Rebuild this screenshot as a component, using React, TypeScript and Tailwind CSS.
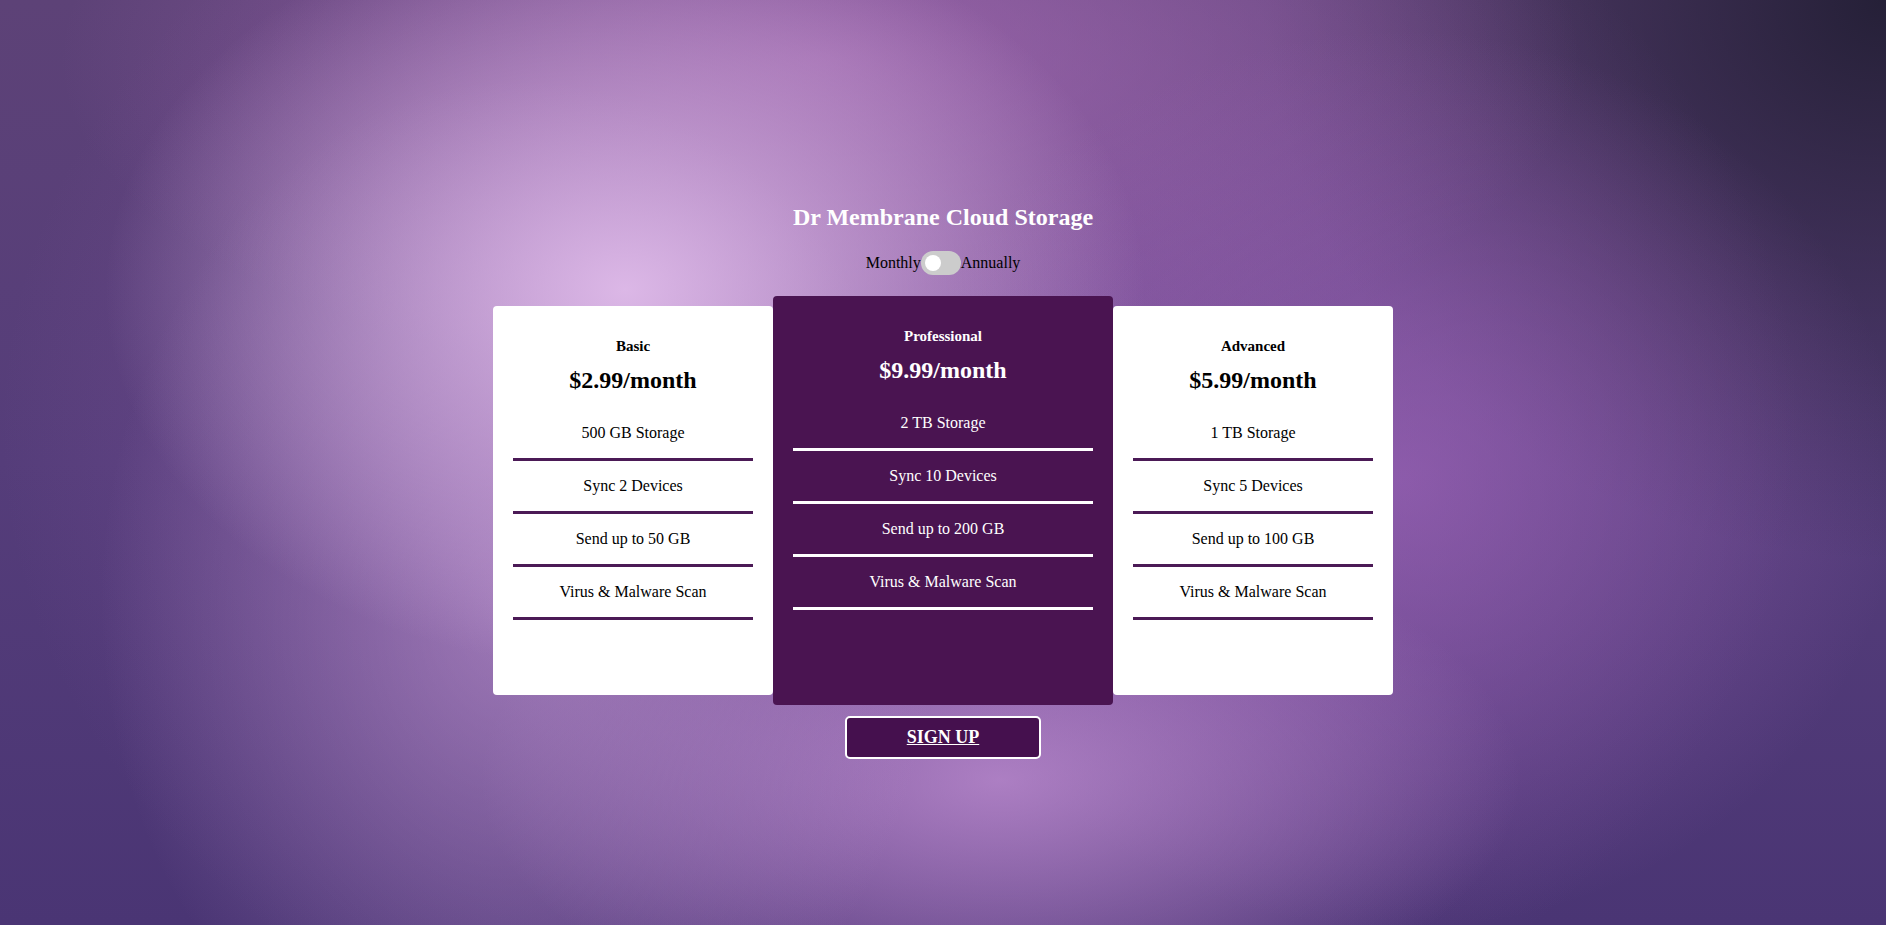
import React, { useState } from 'react'

const plans = [
  {
    name: 'Basic',
    price: '$2.99/month',
    features: ['500 GB Storage', 'Sync 2 Devices', 'Send up to 50 GB', 'Virus & Malware Scan'],
    featured: false,
  },
  {
    name: 'Professional',
    price: '$9.99/month',
    features: ['2 TB Storage', 'Sync 10 Devices', 'Send up to 200 GB', 'Virus & Malware Scan'],
    featured: true,
  },
  {
    name: 'Advanced',
    price: '$5.99/month',
    features: ['1 TB Storage', 'Sync 5 Devices', 'Send up to 100 GB', 'Virus & Malware Scan'],
    featured: false,
  },
]

export default function App() {
  const [annual, setAnnual] = useState(false)

  return (
    <div
      className="min-h-screen w-full flex flex-col items-center pt-[203px] font-['Liberation_Serif',serif] bg-[radial-gradient(ellipse_520px_380px_at_625px_290px,rgba(224,188,234,0.95),rgba(224,188,234,0)),radial-gradient(ellipse_420px_520px_at_520px_600px,rgba(196,156,214,0.6),rgba(196,156,214,0)),radial-gradient(ellipse_520px_260px_at_1000px_780px,rgba(196,146,214,0.75),rgba(196,146,214,0)),radial-gradient(ellipse_500px_450px_at_1400px_480px,rgba(164,104,192,0.6),rgba(164,104,192,0)),radial-gradient(ellipse_760px_330px_at_820px_60px,rgba(170,110,182,0.7),rgba(170,110,182,0)),radial-gradient(ellipse_900px_700px_at_900px_430px,rgba(150,96,176,0.7),rgba(150,96,176,0)),radial-gradient(ellipse_620px_560px_at_1886px_0px,rgba(34,30,52,0.95),rgba(34,30,52,0)),linear-gradient(180deg,#5d4277_0%,#553d7a_50%,#4a3574_100%)]"
    >
      {/* HEADER */}
      <h1 className="text-[24px] leading-[28px] font-bold text-white">Dr Membrane Cloud Storage</h1>

      <div className="mt-[20px] flex items-center text-[16px] text-black">
        <span>Monthly</span>
        <button
          onClick={() => setAnnual(!annual)}
          className="relative w-[40px] h-[24px] rounded-full bg-[#cccccc]"
        >
          <span
            className={`absolute top-[4px] w-[16px] h-[16px] rounded-full bg-white ${
              annual ? 'left-[20px]' : 'left-[4px]'
            }`}
          />
        </button>
        <span>Annually</span>
      </div>

      {/* PLANS */}
      <div className="mt-[21px] flex items-center">
        {plans.map((plan) => (
          <div
            key={plan.name}
            className={`flex flex-col items-center px-[20px] pt-[31px] rounded-[4px] ${
              plan.featured
                ? 'w-[340px] h-[409px] bg-[#4a1451] text-white'
                : 'w-[280px] h-[389px] bg-white text-black'
            }`}
          >
            <h3 className="text-[15px] leading-[18px] font-bold">{plan.name}</h3>
            <p className="mt-[11px] text-[24px] leading-[28px] font-bold">{plan.price}</p>

            <ul className="mt-[14px] w-full">
              {plan.features.map((f) => (
                <li
                  key={f}
                  className={`py-[16px] text-[16px] leading-[18px] text-center border-b-[3px] ${
                    plan.featured ? 'border-white' : 'border-[#4b1a56]'
                  }`}
                >
                  {f}
                </li>
              ))}
            </ul>
          </div>
        ))}
      </div>

      <button className="mt-[11px] w-[196px] h-[43px] rounded-[5px] border-2 border-white bg-[#45104e] text-white text-[18px] font-bold underline">
        SIGN UP
      </button>
    </div>
  )
}
